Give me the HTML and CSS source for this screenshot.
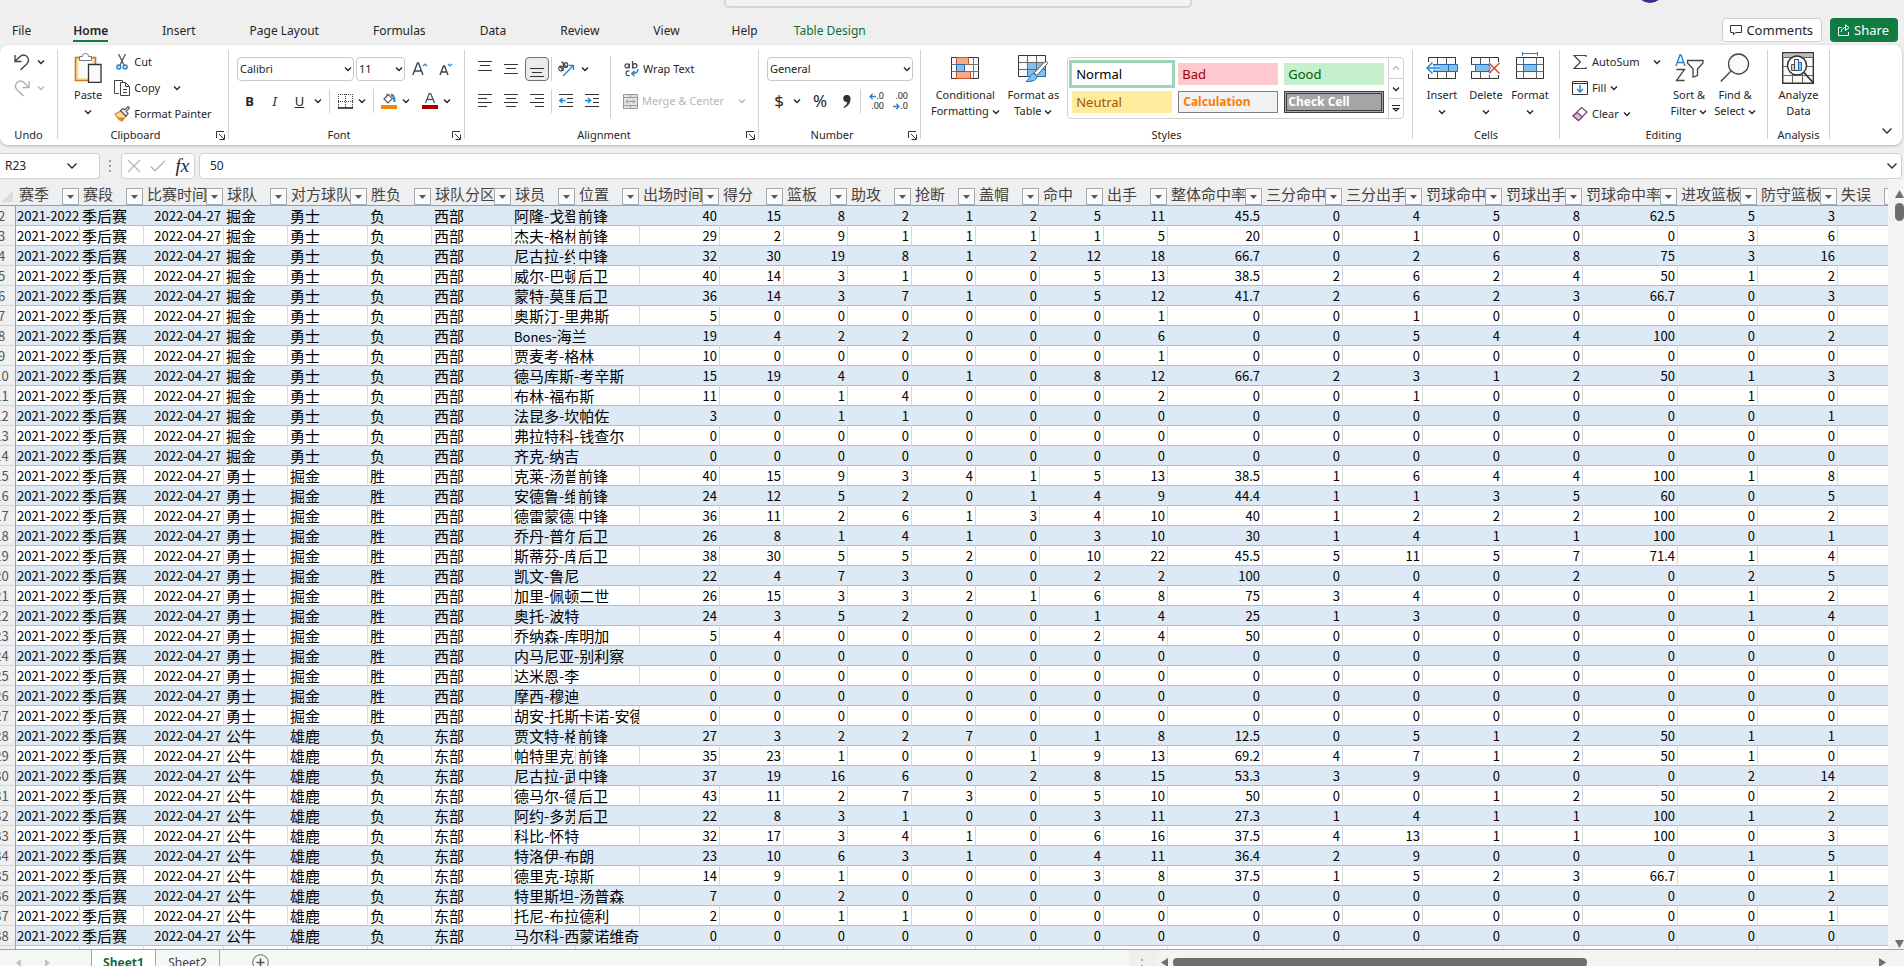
FILE: index.html
```html
<!DOCTYPE html>
<html lang="zh-CN">
<head>
    <meta charset="UTF-8">
    <meta name="viewport" content="width=device-width, initial-scale=1.0">
    <title>Sheet1</title>
    <link rel="stylesheet" href="styles.css">
</head>
<body>
    <svg class="defs" aria-hidden="true">
        <symbol id="chev" viewBox="0 0 8 6"><path d="M1 1.5L4 4.5L7 1.5" fill="none" stroke="currentColor" stroke-width="1.4"/></symbol>
        <symbol id="chev-lg" viewBox="0 0 12 8"><path d="M1.5 1.5L6 6L10.500 1.5" fill="none" stroke="currentColor" stroke-width="1.3"/></symbol>
        <symbol id="launcher" viewBox="0 0 9 9"><path d="M.5 7V.5H8M3 3L8 8M8.500 3.500V8.500H3.500" fill="none" stroke="#333"/></symbol>
    </svg>

    <header class="titlebar">
        <div class="search-box"></div>
        <div class="avatar"></div>
    </header>

    <nav class="tabs">
        <a href="#" class="tab tab-file">File</a>
        <a href="#" class="tab active">Home</a>
        <a href="#" class="tab">Insert</a>
        <a href="#" class="tab">Page Layout</a>
        <a href="#" class="tab">Formulas</a>
        <a href="#" class="tab">Data</a>
        <a href="#" class="tab">Review</a>
        <a href="#" class="tab">View</a>
        <a href="#" class="tab tab-help">Help</a>
        <a href="#" class="tab tab-design">Table Design</a>
        <div class="tab-actions">
            <button class="btn-comments">
                <svg width="12" height="12" viewBox="0 0 12 12"><path d="M.5 1.500H11.500V8.500H5.500L3.500 10.800V8.500H.5Z" fill="none" stroke="#333"/></svg>
                Comments
            </button>
            <button class="btn-share">
                <svg width="12" height="12" viewBox="0 0 12 12"><path d="M3.500 3.500H.5V11.500H10.500V8M3 8C3.500 5 5.500 3.500 8 3.500M7.500 .8L11 3.700L7.500 6.500V.8" fill="none" stroke="#fff"/></svg>
                Share
            </button>
        </div>
    </nav>

    <section class="ribbon">
        <div class="group g-undo">
            <div class="body stack">
                <div class="row">
                    <button class="ib" aria-label="Undo"><svg width="16" height="17" viewBox="0 0 16 17"><path d="M1 1V7.500H7.500M1.200 7.300L5.500 3C8 .6 11 .6 13 2.600C15 4.800 15 7.500 13 9.700L6.500 16" fill="none" stroke="#444" stroke-width="1.4"/></svg></button>
                    <button class="dd" aria-label="Undo list"><svg width="8" height="6"><use href="#chev"/></svg></button>
                </div>
                <div class="row disabled">
                    <button class="ib" aria-label="Redo"><svg width="16" height="17" viewBox="0 0 16 17"><path d="M15 1V7.500H8.500M14.800 7.300L10.500 3C8 .6 5 .6 3 2.600C1 4.800 1 7.500 3 9.700L9.500 16" fill="none" stroke="#b0b0b0" stroke-width="1.4"/></svg></button>
                    <button class="dd" aria-label="Redo list"><svg width="8" height="6"><use href="#chev"/></svg></button>
                </div>
            </div>
            <div class="label">Undo</div>
        </div>
        <i class="sep"></i>

        <div class="group g-clipboard">
            <div class="body cols">
                <button class="big">
                    <svg width="28" height="30" viewBox="0 0 28 30">
                        <path d="M1.500 4.500H21.500V27.500H1.500Z" fill="#fbe0a8" stroke="#cd7a1a" stroke-width="1.600"/>
                        <path d="M4.500 7H18.500V25H4.500Z" fill="#fafafa"/>
                        <path d="M5.500 7.500V3.500H8.500C8.500 1.500 9.500 .5 11.500 .5S14.500 1.500 14.500 3.500H17.500V7.500Z" fill="#fff" stroke="#777"/>
                        <path d="M14.500 11.500H27V29.300H14.500Z" fill="#fafafa" stroke="#333" stroke-width="1.300"/>
                    </svg>
                    <span>Paste</span>
                    <svg width="8" height="6" class="under"><use href="#chev"/></svg>
                </button>
                <div class="stack">
                    <button class="row">
                        <svg width="16" height="16" viewBox="0 0 16 16"><path d="M4.500 0L10 11M11.500 0L6 11" stroke="#555" stroke-width="1.300" fill="none"/><circle cx="4.800" cy="13" r="2" fill="#cfe6f8" stroke="#2283cf" stroke-width="1.300"/><circle cx="11.200" cy="13" r="2" fill="#cfe6f8" stroke="#2283cf" stroke-width="1.300"/></svg>
                        Cut
                    </button>
                    <button class="row">
                        <svg width="16" height="16" viewBox="0 0 16 16"><path d="M5 13.500H.5V.5H8.500V2M6.500 2.500H11.500L15.500 6.500V15.500H6.500ZM11.500 2.500V6.500H15.500M9 9.500H13M9 12.500H13" fill="none" stroke="#444"/></svg>
                        Copy
                        <svg width="8" height="6" class="far"><use href="#chev"/></svg>
                    </button>
                    <button class="row">
                        <svg width="16" height="16" viewBox="0 0 16 16"><path d="M1 8L7 5L12 10L8 15L5 13.500Z" fill="#fbd9a0" stroke="#d9801a" stroke-width="1.200"/><path d="M4 11L10 12L8 15Z" fill="#d9801a"/><path d="M6.500 4.500L9 2.500L10.500 4L14 .6L15.500 2L12 5.500L14 7.500L12 10Z" fill="#fff" stroke="#555" stroke-width="1.200"/></svg>
                        Format Painter
                    </button>
                </div>
            </div>
            <div class="label has-launch">Clipboard</div>
            <button class="launch" aria-label="Clipboard settings"><svg width="9" height="9"><use href="#launcher"/></svg></button>
        </div>
        <i class="sep"></i>

        <div class="group g-font">
            <div class="body two">
                <div class="row">
                    <div class="combo combo-font"><select aria-label="Font"><option>Calibri</option></select><svg width="8" height="6"><use href="#chev"/></svg></div>
                    <div class="combo combo-size"><select aria-label="Font size"><option>11</option></select><svg width="8" height="6"><use href="#chev"/></svg></div>
                    <button class="ib" aria-label="Increase font size"><svg width="16" height="14" viewBox="0 0 16 14"><path d="M.8 13L5.500 1H6.500L11 13M2.500 9H9.500" fill="none" stroke="#444" stroke-width="1.400"/><path d="M11 4L13 2L15 4" fill="none" stroke="#2283cf" stroke-width="1.200"/></svg></button>
                    <button class="ib" aria-label="Decrease font size"><svg width="14" height="14" viewBox="0 0 14 14"><path d="M1 13L4.500 4H5.500L9 13M2.500 10H7.500" fill="none" stroke="#444" stroke-width="1.400"/><path d="M9 2L11 4L13 2" fill="none" stroke="#2283cf" stroke-width="1.200"/></svg></button>
                </div>
                <div class="row">
                    <button class="ib glyph"><b>B</b></button>
                    <button class="ib glyph"><i>I</i></button>
                    <button class="ib glyph"><u>U</u></button>
                    <button class="dd" aria-label="Underline style"><svg width="8" height="6"><use href="#chev"/></svg></button>
                    <i class="vline"></i>
                    <button class="ib sm" aria-label="Borders"><svg width="15" height="15" viewBox="0 0 15 15"><path d="M0 .5H15M0 7.500H15M.5 0V13M7.500 0V13M14.500 0V13" stroke="#444" stroke-dasharray="1 1"/><path d="M0 14H15" stroke="#111" stroke-width="1.500"/></svg></button>
                    <button class="dd" aria-label="Border style"><svg width="8" height="6"><use href="#chev"/></svg></button>
                    <i class="vline"></i>
                    <button class="ib sm" aria-label="Fill colour"><svg width="16" height="16" viewBox="0 0 16 16"><path d="M3 6L7.500 1.500L11.500 5.500L7 10Z" fill="#fff" stroke="#555" stroke-width="1.200"/><path d="M6 3V.5" stroke="#555"/><path d="M10 1.500C13 2 13.500 5 13.500 9" stroke="#2283cf" stroke-width="2" fill="none"/><path d="M0 12H16V16H0Z" fill="#f28b00"/></svg></button>
                    <button class="dd" aria-label="Fill colours"><svg width="8" height="6"><use href="#chev"/></svg></button>
                    <button class="ib sm after" aria-label="Font colour"><svg width="16" height="16" viewBox="0 0 16 16"><path d="M3.500 10L7.500 0H8.500L12.500 10M5 6.500H11" fill="none" stroke="#555" stroke-width="1.300"/><path d="M0 12H16V16H0Z" fill="#a80000"/></svg></button>
                    <button class="dd" aria-label="Font colours"><svg width="8" height="6"><use href="#chev"/></svg></button>
                </div>
            </div>
            <div class="label has-launch">Font</div>
            <button class="launch" aria-label="Font settings"><svg width="9" height="9"><use href="#launcher"/></svg></button>
        </div>
        <i class="sep"></i>

        <div class="group g-align">
            <div class="body cols">
                <div class="two">
                    <div class="row">
                        <button class="ib" aria-label="Top align"><svg width="14" height="18" viewBox="0 0 14 18"><path d="M0 1.500H14M2 5.500H12M0 10.500H14" stroke="#333"/></svg></button>
                        <button class="ib" aria-label="Middle align"><svg width="14" height="18" viewBox="0 0 14 18"><path d="M0 4.500H14M2 8.500H12M0 13.500H14" stroke="#333"/></svg></button>
                        <button class="ib pressed" aria-label="Bottom align"><svg width="14" height="18" viewBox="0 0 14 18"><path d="M0 8.500H14M2 12.500H12M0 16.500H14" stroke="#333"/></svg></button>
                        <i class="vline"></i>
                        <button class="ib" aria-label="Orientation"><svg width="18" height="16" viewBox="0 0 18 16"><g fill="none" stroke="#444" stroke-width="1.200"><circle cx="4" cy="7.500" r="2.300"/><path d="M2.500 5L6.500 9.500"/><circle cx="8.500" cy="4" r="2.300"/><path d="M4.500 .5L10 6.500"/></g><path d="M6 15L16 5M12 4.500H16.500V9" fill="none" stroke="#2283cf" stroke-width="1.300"/></svg></button>
                        <button class="dd" aria-label="Orientation options"><svg width="8" height="6"><use href="#chev"/></svg></button>
                    </div>
                    <div class="row">
                        <button class="ib" aria-label="Align left"><svg width="14" height="14" viewBox="0 0 14 14"><path d="M0 .5H14M0 4.500H9M0 8.500H14M0 12.500H9" stroke="#333"/></svg></button>
                        <button class="ib" aria-label="Center"><svg width="14" height="14" viewBox="0 0 14 14"><path d="M0 .5H14M2 4.500H12M0 8.500H14M2 12.500H12" stroke="#333"/></svg></button>
                        <button class="ib" aria-label="Align right"><svg width="14" height="14" viewBox="0 0 14 14"><path d="M0 .5H14M5 4.500H14M0 8.500H14M5 12.500H14" stroke="#333"/></svg></button>
                        <i class="vline"></i>
                        <button class="ib" aria-label="Decrease indent"><svg width="14" height="14" viewBox="0 0 14 14"><path d="M0 .5H14M8 4.500H14M8 8.500H14M0 12.500H14" stroke="#333"/><path d="M.8 6.500H6.500M3.500 4L.8 6.500L3.500 9" fill="none" stroke="#2283cf" stroke-width="1.300"/></svg></button>
                        <button class="ib" aria-label="Increase indent"><svg width="14" height="14" viewBox="0 0 14 14"><path d="M0 .5H14M8 4.500H14M8 8.500H14M0 12.500H14" stroke="#333"/><path d="M0 6.500H5.700M3 4L5.700 6.500L3 9" fill="none" stroke="#2283cf" stroke-width="1.300"/></svg></button>
                    </div>
                </div>
                <i class="vline tall"></i>
                <div class="two wrap-col">
                    <button class="row">
                        <svg width="16" height="16" viewBox="0 0 16 16"><g fill="none" stroke="#444" stroke-width="1.200"><circle cx="4" cy="4.800" r="2"/><path d="M6.300 2.500V7.500M9.500 0V7.500M6.500 10.300C5 9.300 3 10.200 3 12.300S5 15.300 6.500 14.300"/><circle cx="11.800" cy="4.800" r="2.200"/></g><path d="M15 8C15 11 13.500 12.500 9 12.500M11.500 9.800L8.800 12.500L11.500 15.200" fill="none" stroke="#2283cf" stroke-width="1.400"/></svg>
                        Wrap Text
                    </button>
                    <button class="row" disabled>
                        <svg width="15" height="15" viewBox="0 0 15 15"><path d="M.5 .5H14.500V14.500H.5ZM.5 3.500H14.500M.5 11.500H14.500M7.500 .5V3.500M7.500 11.500V14.500" fill="#e4e4e4" stroke="#999"/><path d="M3 7.500H12M5 5.500L3 7.500L5 9.500M10 5.500L12 7.500L10 9.500" fill="none" stroke="#999"/></svg>
                        Merge &amp; Center
                        <svg width="8" height="6" class="end"><use href="#chev"/></svg>
                    </button>
                </div>
            </div>
            <div class="label has-launch">Alignment</div>
            <button class="launch" aria-label="Alignment settings"><svg width="9" height="9"><use href="#launcher"/></svg></button>
        </div>
        <i class="sep"></i>

        <div class="group g-number">
            <div class="body two">
                <div class="row">
                    <div class="combo combo-number"><select aria-label="Number format"><option>General</option></select><svg width="8" height="6"><use href="#chev"/></svg></div>
                </div>
                <div class="row">
                    <button class="ib sign">$</button>
                    <button class="dd" aria-label="Currency"><svg width="8" height="6"><use href="#chev"/></svg></button>
                    <button class="ib sign pct">%</button>
                    <button class="ib" aria-label="Comma style"><svg width="8" height="13" viewBox="0 0 8 13"><path d="M3.500 0A3.500 3.500 0 0 1 7.500 4C7.500 8 5 11.500 1 13L.5 12C3 10.500 4 9 4 7A3.500 3.500 0 1 1 3.500 0Z" fill="#333"/></svg></button>
                    <i class="vline"></i>
                    <button class="dec">
                        <span><svg width="7" height="7" viewBox="0 0 7 7"><path d="M7 3.500H1M3.700 .8L1 3.500L3.700 6.200" fill="none" stroke="#2283cf" stroke-width="1.300"/></svg>.0</span>
                        <span>.00</span>
                    </button>
                    <button class="dec">
                        <span>.00</span>
                        <span><svg width="7" height="7" viewBox="0 0 7 7"><path d="M0 3.500H6M3.300 .8L6 3.500L3.300 6.200" fill="none" stroke="#2283cf" stroke-width="1.300"/></svg>.0</span>
                    </button>
                </div>
            </div>
            <div class="label has-launch">Number</div>
            <button class="launch" aria-label="Number settings"><svg width="9" height="9"><use href="#launcher"/></svg></button>
        </div>
        <i class="sep"></i>

        <div class="group g-styles">
            <div class="body cols">
                <button class="big">
                    <svg width="28" height="22" viewBox="0 0 28 22">
                        <path d="M.5 .5H27.500V21.500H.5Z" fill="#fafafa" stroke="#333"/><path d="M.5 7.500H27.500M.5 14.500H27.500M5.500 .5V21.500M22.500 .5V21.500" stroke="#777"/>
                        <path d="M5.500 .5H17.500V7.500H5.500ZM5.500 14.500H19.500V21.500H5.500Z" fill="#f4ab8b" stroke="#c8502b"/><path d="M5.500 7.500H13.500V14.500H5.500Z" fill="#83beec" stroke="#1f6fb8"/>
                    </svg>
                    <span>Conditional<br>Formatting <svg width="8" height="6"><use href="#chev"/></svg></span>
                </button>
                <button class="big">
                    <svg width="30" height="28" viewBox="0 0 30 28">
                        <path d="M.5 1.500H27.500V22.500H.5Z" fill="#fafafa" stroke="#333"/><path d="M9.500 8.500H27.500V22.500H9.500Z" fill="#83beec" stroke="#1f6fb8"/><path d="M.5 8.500H27.500M.5 15.500H27.500M9.500 1.500V22.500M18.500 1.500V22.500" stroke="#666"/>
                        <path d="M28.500 7.500C29.500 8 29.500 9 29 10L19 21.500L16 19L26 8.500Z" fill="#fff" stroke="#555"/><path d="M16 19.500L19 22C19.500 25.500 15 28 8 27.500C11 26 11.500 20 16 19.500Z" fill="#83beec" stroke="#1f6fb8"/>
                    </svg>
                    <span>Format as<br>Table <svg width="8" height="6"><use href="#chev"/></svg></span>
                </button>
                <div class="gallery">
                    <div class="swatches">
                        <button class="st normal">Normal</button>
                        <button class="st bad">Bad</button>
                        <button class="st good">Good</button>
                        <button class="st neutral">Neutral</button>
                        <button class="st calc">Calculation</button>
                        <button class="st check">Check Cell</button>
                    </div>
                    <div class="gallery-nav">
                        <button class="faded" aria-label="Previous styles"><svg width="8" height="6" viewBox="0 0 8 6"><path d="M1 4.500L4 1.500L7 4.500" fill="none" stroke="currentColor" stroke-width="1.200"/></svg></button>
                        <button aria-label="Next styles"><svg width="8" height="6"><use href="#chev"/></svg></button>
                        <button aria-label="More styles"><svg width="8" height="8" viewBox="0 0 8 8"><path d="M0 .5H8M1.500 3.500L4 6L6.500 3.500Z" fill="none" stroke="currentColor" stroke-width="1.200"/></svg></button>
                    </div>
                </div>
            </div>
            <div class="label">Styles</div>
        </div>
        <i class="sep"></i>

        <div class="group g-cells">
            <div class="body cols">
                <button class="big">
                    <svg width="32" height="22" viewBox="0 0 32 22"><path d="M2.500 .5H29.500V21.500H2.500Z" fill="#fafafa" stroke="#333"/><path d="M2.500 7.500H29.500M2.500 14.500H29.500M11.500 .5V21.500M20.500 .5V21.500" stroke="#555"/><path d="M8 7.500H31.500V14.500H8Z" fill="#83beec" stroke="#1f6fb8"/><path d="M22.500 7.500V14.500" stroke="#1f6fb8"/><path d="M0 5H7V9.500H14V12.500H7V17H0Z" fill="#fff"/><path d="M1 11H14M6.500 5.500L1 11L6.500 16.500" fill="none" stroke="#2283cf" stroke-width="1.500"/></svg>
                    <span>Insert</span>
                    <svg width="8" height="6" class="under"><use href="#chev"/></svg>
                </button>
                <button class="big">
                    <svg width="30" height="22" viewBox="0 0 30 22"><path d="M.5 .5H27.500V21.500H.5Z" fill="#fafafa" stroke="#333"/><path d="M.5 7.500H27.500M.5 14.500H27.500M9.500 .5V21.500M18.500 .5V21.500" stroke="#555"/><path d="M0 8H4V14H0Z" fill="#fff"/><path d="M4.500 7.500H17L20 11L17 14.500H4.500Z" fill="#83beec" stroke="#1f6fb8"/><path d="M17 5H30V18H17L20 11Z" fill="#fff"/><path d="M18 6L28.500 16.500M28.500 6L18 16.500" stroke="#e0452c" stroke-width="1.500"/></svg>
                    <span>Delete</span>
                    <svg width="8" height="6" class="under"><use href="#chev"/></svg>
                </button>
                <button class="big">
                    <svg width="28" height="32" viewBox="0 0 28 32"><path d="M6.500 0V4M21.500 0V4M6.500 1.500H21.500" stroke="#2283cf"/><path d="M.5 5.500H27.500V26.500H.5Z" fill="#fafafa" stroke="#333"/><path d="M.5 12.500H27.500M.5 19.500H27.500M7.500 5.500V26.500M20.500 5.500V26.500" stroke="#666"/><path d="M7.500 12.500H20.500V19.500H7.500Z" fill="#83beec" stroke="#1f6fb8"/></svg>
                    <span>Format</span>
                    <svg width="8" height="6" class="under"><use href="#chev"/></svg>
                </button>
            </div>
            <div class="label">Cells</div>
        </div>
        <i class="sep"></i>

        <div class="group g-editing">
            <div class="body cols">
                <div class="stack">
                    <button class="row">
                        <svg width="16" height="16" viewBox="0 0 16 16"><path d="M14 3V1.500H2L8.500 8L2 14.500H14V13" fill="none" stroke="#444" stroke-width="1.200"/></svg>
                        AutoSum
                        <svg width="8" height="6" class="far"><use href="#chev"/></svg>
                    </button>
                    <button class="row">
                        <svg width="16" height="16" viewBox="0 0 16 16"><path d="M.5 1.500H15.500V14.500H.5ZM.5 3.500H15.500" fill="none" stroke="#333"/><path d="M8 5V12M5 9L8 12L11 9" fill="none" stroke="#2283cf" stroke-width="1.400"/></svg>
                        Fill <svg width="8" height="6"><use href="#chev"/></svg>
                    </button>
                    <button class="row">
                        <svg width="16" height="16" viewBox="0 0 16 16"><path d="M9.500 1.500L15 6L6.500 14.500L1 10Z" fill="#fff" stroke="#7a3f7a" stroke-width="1.200"/><path d="M5 6.500L10.500 11L6.500 14.500L1 10Z" fill="#d9bfd9" stroke="#7a3f7a" stroke-width="1.200"/></svg>
                        Clear <svg width="8" height="6"><use href="#chev"/></svg>
                    </button>
                </div>
                <button class="big">
                    <svg width="29" height="28" viewBox="0 0 29 28"><path d="M1 12L5 1H6L10 12M2.500 8.500H8.500" fill="none" stroke="#2283cf" stroke-width="1.400"/><path d="M1.500 15.500H9.500L1.500 26.500H9.500" fill="none" stroke="#444" stroke-width="1.300"/><path d="M12.500 6.500H28V9L22.500 15V21.500L18 23V15L12.500 9Z" fill="#fafafa" stroke="#444" stroke-width="1.300"/></svg>
                    <span>Sort &amp;<br>Filter <svg width="8" height="6"><use href="#chev"/></svg></span>
                </button>
                <button class="big">
                    <svg width="30" height="30" viewBox="0 0 30 30"><circle cx="18.500" cy="11" r="10" fill="#fafafa" stroke="#444" stroke-width="1.300"/><path d="M11 18L.8 28.500" stroke="#444" stroke-width="1.400"/></svg>
                    <span>Find &amp;<br>Select <svg width="8" height="6"><use href="#chev"/></svg></span>
                </button>
            </div>
            <div class="label">Editing</div>
        </div>
        <i class="sep"></i>

        <div class="group g-analysis">
            <div class="body cols">
                <button class="big">
                    <svg width="32" height="32" viewBox="0 0 32 32"><path d="M.7 .7H31.300V31.300H.7Z" fill="#fafafa" stroke="#333" stroke-width="1.400"/><path d="M1.500 1.500H30.500V5H1.500Z" fill="#bbb"/><path d="M1 5.500H31M1 14.500H31M1 23.500H31M10.500 14V31M20.500 14V31" stroke="#666"/><circle cx="15" cy="13.500" r="9.500" fill="#fff" stroke="#333" stroke-width="1.500"/><path d="M9.500 12.500H12.500V18.500H9.500Z" fill="#ccc" stroke="#555"/><path d="M12.500 7.500H16.500V18.500H12.500Z" fill="#eee" stroke="#444"/><path d="M16.500 10.500H19.500V18.500H16.500Z" fill="#83beec" stroke="#1f6fb8"/><path d="M22 20.500L31 30.500" stroke="#333" stroke-width="1.800"/></svg>
                    <span>Analyze<br>Data</span>
                </button>
            </div>
            <div class="label">Analysis</div>
        </div>
        <i class="sep"></i>
        <button class="collapse" aria-label="Collapse ribbon"><svg width="12" height="8"><use href="#chev-lg"/></svg></button>
    </section>

    <section class="formula-bar">
        <div class="name-box"><input type="text" value="R23" aria-label="Name box"><svg width="12" height="8"><use href="#chev-lg"/></svg></div>
        <svg class="grip" width="3" height="12" viewBox="0 0 3 12"><path d="M0 0H2V2H0ZM0 5H2V7H0ZM0 10H2V12H0Z" fill="#999"/></svg>
        <div class="fx-box">
            <button aria-label="Cancel"><svg width="14" height="14" viewBox="0 0 14 14"><path d="M1 1L13 13M13 1L1 13" stroke="#b5b5b5" stroke-width="1.300"/></svg></button>
            <button aria-label="Enter"><svg width="16" height="12" viewBox="0 0 16 12"><path d="M.8 6.500L5 10.800L15.200 .8" fill="none" stroke="#b5b5b5" stroke-width="1.400"/></svg></button>
            <button class="fx">fx</button>
        </div>
        <div class="formula-input"><input type="text" value="50" aria-label="Formula"><svg width="12" height="8"><use href="#chev-lg"/></svg></div>
    </section>

    <main class="sheet">
        <div class="grid-wrap">
            <table id="grid">
                <colgroup id="cols"></colgroup>
                <thead><tr id="head"></tr></thead>
                <tbody id="rows"></tbody>
            </table>
        </div>
        <div class="vscroll">
            <svg width="9" height="8" viewBox="0 0 9 8"><path d="M4.500 0L9 8H0Z" fill="#6e6e6e"/></svg>
            <div class="vthumb"></div>
            <svg width="9" height="8" viewBox="0 0 9 8" class="down"><path d="M0 0H9L4.500 8Z" fill="#6e6e6e"/></svg>
        </div>
    </main>

    <footer class="sheet-bar">
        <div class="sheet-nav">
            <button aria-label="Previous sheet"><svg width="5" height="8" viewBox="0 0 5 8"><path d="M5 0V8L0 4Z" fill="#c2c2c2"/></svg></button>
            <button aria-label="Next sheet"><svg width="5" height="8" viewBox="0 0 5 8"><path d="M0 0V8L5 4Z" fill="#c2c2c2"/></svg></button>
        </div>
        <button class="sheet-tab current">Sheet1</button>
        <button class="sheet-tab">Sheet2</button>
        <button class="add-sheet" aria-label="New sheet"><svg width="17" height="17" viewBox="0 0 17 17"><circle cx="8.500" cy="8.500" r="7.800" fill="none" stroke="#666"/><path d="M8.500 4.500V12.500M4.500 8.500H12.500" stroke="#555" stroke-width="1.600"/></svg></button>
        <div class="hscroll">
            <svg width="2" height="8" viewBox="0 0 2 8"><path d="M0 0H2V2H0ZM0 6H2V8H0Z" fill="#aaa"/></svg>
            <div class="htrack">
                <svg width="7" height="9" viewBox="0 0 7 9"><path d="M7 0V9L0 4.500Z" fill="#6e6e6e"/></svg>
                <div class="hroom"><div class="hthumb"></div></div>
                <svg width="7" height="9" viewBox="0 0 7 9"><path d="M0 0V9L7 4.500Z" fill="#6e6e6e"/></svg>
            </div>
        </div>
    </footer>

    <script>
        const columns = [
            ["赛季", 64], ["赛段", 64], ["比赛时间", 80], ["球队", 64], ["对方球队", 80], ["胜负", 64],
            ["球队分区", 80], ["球员", 64], ["位置", 64], ["出场时间", 80], ["得分", 64], ["篮板", 64],
            ["助攻", 64], ["抢断", 64], ["盖帽", 64], ["命中", 64], ["出手", 64], ["整体命中率", 95],
            ["三分命中", 80], ["三分出手", 80], ["罚球命中", 80], ["罚球出手", 80], ["罚球命中率", 95],
            ["进攻篮板", 80], ["防守篮板", 80], ["失误", 64]
        ];

        // equipo, rival, resultado, zona
        const teams = {
            N: ["掘金", "勇士", "负", "西部"],
            W: ["勇士", "掘金", "胜", "西部"],
            B: ["公牛", "雄鹿", "负", "东部"]
        };

        const zeros = "0 0 0 0 0 0 0 0 0 0 0 0 0 0 0 0";
        const players = [
            ["N", "阿隆-戈登", "前锋", "40 15 8 2 1 2 5 11 45.5 0 4 5 8 62.5 5 3"],
            ["N", "杰夫-格林", "前锋", "29 2 9 1 1 1 1 5 20 0 1 0 0 0 3 6"],
            ["N", "尼古拉-约基奇", "中锋", "32 30 19 8 1 2 12 18 66.7 0 2 6 8 75 3 16"],
            ["N", "威尔-巴顿", "后卫", "40 14 3 1 0 0 5 13 38.5 2 6 2 4 50 1 2"],
            ["N", "蒙特-莫里斯", "后卫", "36 14 3 7 1 0 5 12 41.7 2 6 2 3 66.7 0 3"],
            ["N", "奥斯汀-里弗斯", "", "5 0 0 0 0 0 0 1 0 0 1 0 0 0 0 0"],
            ["N", "<span>Bones</span>-海兰", "", "19 4 2 2 0 0 0 6 0 0 5 4 4 100 0 2"],
            ["N", "贾麦考-格林", "", "10 0 0 0 0 0 0 1 0 0 0 0 0 0 0 0"],
            ["N", "德马库斯-考辛斯", "", "15 19 4 0 1 0 8 12 66.7 2 3 1 2 50 1 3"],
            ["N", "布林-福布斯", "", "11 0 1 4 0 0 0 2 0 0 1 0 0 0 1 0"],
            ["N", "法昆多-坎帕佐", "", "3 0 1 1 0 0 0 0 0 0 0 0 0 0 0 1"],
            ["N", "弗拉特科-钱查尔", "", zeros],
            ["N", "齐克-纳吉", "", zeros],
            ["W", "克莱-汤普森", "前锋", "40 15 9 3 4 1 5 13 38.5 1 6 4 4 100 1 8"],
            ["W", "安德鲁-维金斯", "前锋", "24 12 5 2 0 1 4 9 44.4 1 1 3 5 60 0 5"],
            ["W", "德雷蒙德-格林", "中锋", "36 11 2 6 1 3 4 10 40 1 2 2 2 100 0 2"],
            ["W", "乔丹-普尔", "后卫", "26 8 1 4 1 0 3 10 30 1 4 1 1 100 0 1"],
            ["W", "斯蒂芬-库里", "后卫", "38 30 5 5 2 0 10 22 45.5 5 11 5 7 71.4 1 4"],
            ["W", "凯文-鲁尼", "", "22 4 7 3 0 0 2 2 100 0 0 0 2 0 2 5"],
            ["W", "加里-佩顿二世", "", "26 15 3 3 2 1 6 8 75 3 4 0 0 0 1 2"],
            ["W", "奥托-波特", "", "24 3 5 2 0 0 1 4 25 1 3 0 0 0 1 4"],
            ["W", "乔纳森-库明加", "", "5 4 0 0 0 0 2 4 50 0 0 0 0 0 0 0"],
            ["W", "内马尼亚-别利察", "", zeros],
            ["W", "达米恩-李", "", zeros],
            ["W", "摩西-穆迪", "", zeros],
            ["W", "胡安-托斯卡诺-安德森", "", zeros],
            ["B", "贾文特-格林", "前锋", "27 3 2 2 7 0 1 8 12.5 0 5 1 2 50 1 1"],
            ["B", "帕特里克-威廉姆斯", "前锋", "35 23 1 0 0 1 9 13 69.2 4 7 1 2 50 1 0"],
            ["B", "尼古拉-武切维奇", "中锋", "37 19 16 6 0 2 8 15 53.3 3 9 0 0 0 2 14"],
            ["B", "德马尔-德罗赞", "后卫", "43 11 2 7 3 0 5 10 50 0 0 1 2 50 0 2"],
            ["B", "阿约-多苏姆", "后卫", "22 8 3 1 0 0 3 11 27.3 1 4 1 1 100 1 2"],
            ["B", "科比-怀特", "", "32 17 3 4 1 0 6 16 37.5 4 13 1 1 100 0 3"],
            ["B", "特洛伊-布朗", "", "23 10 6 3 1 0 4 11 36.4 2 9 0 0 0 1 5"],
            ["B", "德里克-琼斯", "", "14 9 1 0 0 0 3 8 37.5 1 5 2 3 66.7 0 1"],
            ["B", "特里斯坦-汤普森", "", "7 0 2 0 0 0 0 0 0 0 0 0 0 0 0 2"],
            ["B", "托尼-布拉德利", "", "2 0 1 1 0 0 0 0 0 0 0 0 0 0 0 1"],
            ["B", "马尔科-西蒙诺维奇", "", zeros]
        ];

        document.getElementById("cols").innerHTML = `<col style="width: 28px">` +
            columns.map(c => `<col style="width: ${c[1]}px">`).join("");

        document.getElementById("head").innerHTML = `<th class="corner"></th>` + columns.map(c => `
            <th><div class="th"><span>${c[0]}</span><button aria-label="${c[0]}"><svg width="7" height="4" viewBox="0 0 7 4"><path d="M0 0H7L3.500 4Z" fill="#555"/></svg></button></div></th>`).join("");

        let html = "";
        players.forEach((p, i) => {
            const [team, name, pos, stats] = p;
            const [own, rival, result, zone] = teams[team];
            // sin posición, el nombre ocupa también la celda vecina
            const who = pos ? `<td class="cut">${name}</td><td>${pos}</td>` : `<td class="cut" colspan="2">${name}</td>`;
            html += `<tr><th>${i + 2}</th><td class="num season">2021-2022</td><td>季后赛</td><td class="num">2022-04-27</td>
                <td>${own}</td><td>${rival}</td><td>${result}</td><td>${zone}</td>${who}
                ${stats.split(" ").map(n => `<td class="num">${n}</td>`).join("")}<td></td></tr>`;
        });
        html += `<tr><th></th>${"<td></td>".repeat(columns.length)}</tr>`;
        document.getElementById("rows").innerHTML = html;
    </script>
</body>
</html>
```
FILE: styles.css
```css
* {
    box-sizing: border-box;
}
body {
    margin: 0;
    height: 100vh;
    display: flex;
    flex-direction: column;
    overflow: hidden;
    background: #efefef;
    color: #262626;
    font: 11px/16px "Noto Sans", "Noto Sans CJK SC", sans-serif;
}
button, input, select {
    font: inherit;
    color: inherit;
    border: none;
    background: none;
    padding: 0;
    margin: 0;
    outline: none;
}
button {
    cursor: pointer;
}
svg {
    flex: none;
}
.defs {
    position: absolute;
    width: 0;
    height: 0;
}

/* title bar and tabs */
.titlebar {
    position: relative;
    flex: none;
    height: 15px;
    padding-left: 12px;
    overflow: hidden;
}
.search-box {
    width: 468px;
    height: 8px;
    margin: 0 auto;
    border: 2px solid #d6d6d6;
    border-top: none;
    border-radius: 0 0 5px 5px;
    background: #f3f3f3;
}
.avatar {
    position: absolute;
    right: 240px;
    top: -25px;
    width: 28px;
    height: 28px;
    border-radius: 50%;
    background: #3b2e8c;
}
.tabs {
    flex: none;
    display: flex;
    align-items: center;
    height: 30px;
    font-size: 12px;
}
.tab {
    position: relative;
    padding: 2px 27px 0;
    line-height: 28px;
    color: #262626;
    text-decoration: none;
}
.tab-file {
    padding: 2px 15px 0 12px;
}
.tab.active {
    font-weight: 600;
}
.tab.active::after {
    content: "";
    position: absolute;
    left: 27px;
    right: 27px;
    bottom: 3px;
    height: 2px;
    background: #107c41;
}
.tab-help {
    padding: 2px 18px 0 25px;
}
.tab-design {
    padding-left: 18px;
    color: #0f6c38;
}
.tab-actions {
    display: flex;
    gap: 8px;
    margin-left: auto;
    padding-right: 6px;
    font-size: 13px;
}
.tab-actions button {
    display: flex;
    align-items: center;
    gap: 4px;
    height: 24px;
    border-radius: 4px;
}
.btn-comments {
    padding: 0 8px 0 7px;
    border: 1px solid #d1d1d1;
    background: #fff;
}
.btn-share {
    padding: 0 9px 0 8px;
    background: #107c41;
    color: #fff;
}

/* ribbon */
.ribbon {
    flex: none;
    display: flex;
    height: 100px;
    margin-right: 2px;
    background: #fff;
    border-radius: 8px;
    box-shadow: 0 1px 3px rgba(0, 0, 0, 0.25);
}
.sep {
    flex: none;
    width: 1px;
    margin: 5px 0 6px;
    background: #d1d1d1;
}
.group {
    position: relative;
    flex: none;
    display: flex;
    flex-direction: column;
}
.body {
    height: 82px;
}
.label {
    height: 18px;
    text-align: center;
}
.has-launch {
    padding-right: 15px;
}
.launch {
    position: absolute;
    right: 3px;
    bottom: 5px;
    height: 9px;
    display: flex;
}
.row {
    display: flex;
    align-items: center;
}
.cols {
    display: flex;
}
.stack {
    padding-top: 4px;
}
.stack .row {
    height: 26px;
}
.stack button.row, .wrap-col .row {
    gap: 4px;
}
.two {
    display: flex;
    flex-direction: column;
    gap: 8px;
    padding-top: 12px;
}
.two .row {
    height: 24px;
}
.ib {
    display: flex;
    align-items: center;
    justify-content: center;
    width: 26px;
    height: 24px;
}
.ib.sm {
    width: 22px;
}
.ib.after {
    margin-left: 7px;
}
.dd {
    display: flex;
    align-items: center;
    justify-content: center;
    width: 12px;
    height: 24px;
}
.disabled, button:disabled {
    color: #b5b5b5;
}
.vline {
    width: 1px;
    height: 24px;
    margin: 0 4px 0 5px;
    background: #d1d1d1;
}
.vline.tall {
    height: 62px;
    margin: 11px 12px 0 5px;
}
.big {
    display: flex;
    flex-direction: column;
    align-items: center;
    padding-top: 4px;
    text-align: center;
    white-space: nowrap;
}
.big > svg:first-child {
    height: 38px;
}
.big .under {
    margin-top: 6px;
}
.far {
    margin-left: 9px;
}
.combo {
    position: relative;
    height: 24px;
}
.combo select {
    width: 100%;
    height: 24px;
    padding: 0 2px;
    border: 1px solid #c8c8c8;
    border-radius: 4px;
    background: #fff;
    appearance: none;
}
.combo svg {
    position: absolute;
    right: 2px;
    top: 9px;
    pointer-events: none;
}

.g-undo {
    width: 57px;
}
.g-undo .stack {
    padding-left: 9px;
}
.g-clipboard {
    width: 170px;
}
.g-clipboard .cols {
    padding-left: 16px;
    gap: 12px;
}
.g-font {
    width: 235px;
}
.g-font .body {
    padding-left: 8px;
}
.combo-font {
    width: 117px;
    margin-right: 2px;
}
.combo-size {
    width: 49px;
    margin-right: 2px;
}
.glyph {
    width: 25px;
    font-size: 13px;
}
.g-align {
    width: 293px;
}
.g-align .body {
    padding-left: 7px;
}
.g-align .row .vline {
    margin: 0 1px;
}
.pressed {
    width: 24px;
    margin: 0 1px;
    border: 1px solid #707070;
    border-radius: 4px;
    background: #ebebeb;
}
.wrap-col .end {
    margin-left: 10px;
}
.g-number {
    width: 161px;
}
.g-number .body {
    padding-left: 8px;
}
.g-number .vline {
    margin: 0 2px 0 0;
}
.combo-number {
    width: 146px;
}
.sign {
    width: 24px;
    font-size: 17px;
}
.pct {
    margin-left: 3px;
    width: 28px;
}
.dec {
    width: 24px;
    padding-right: 3px;
    font-size: 9px;
    line-height: 10px;
}
.dec span {
    display: flex;
    align-items: center;
    justify-content: flex-end;
}
.g-styles {
    width: 491px;
}
.g-styles .cols {
    padding-left: 10px;
    gap: 8px;
}
.gallery {
    display: flex;
    height: 62px;
    margin-top: 12px;
    border: 1px solid #d1d1d1;
    border-radius: 4px;
}
.swatches {
    display: grid;
    grid-template-columns: repeat(3, 100px);
    grid-auto-rows: 22px;
    gap: 6px;
    padding: 5px 4px;
}
.st {
    padding-left: 4px;
    text-align: left;
    font-size: 13px;
    line-height: 20px;
}
.normal {
    background: #fff;
    color: #000;
    outline: 3px solid #9bd5b5;
}
.bad {
    background: #ffc7ce;
    color: #9c0006;
}
.good {
    background: #c6efce;
    color: #006100;
}
.neutral {
    background: #ffeb9c;
    color: #9c5700;
}
.calc {
    border: 1px solid #7f7f7f;
    background: #f2f2f2;
    color: #fa7d00;
    font-size: 12px;
    font-weight: bold;
}
.check {
    border: 3px double #3f3f3f;
    background: #a5a5a5;
    color: #fff;
    padding-left: 1px;
    font-size: 12px;
    font-weight: bold;
    line-height: 16px;
}
.gallery-nav {
    display: grid;
    grid-template-rows: repeat(3, 1fr);
    width: 15px;
    border-left: 1px solid #d1d1d1;
}
.gallery-nav button {
    display: flex;
    align-items: center;
    justify-content: center;
}
.gallery-nav button + button {
    border-top: 1px solid #d1d1d1;
}
.gallery-nav .faded {
    color: #b5b5b5;
}
.g-cells {
    width: 146px;
}
.g-cells .cols {
    display: grid;
    grid-template-columns: repeat(3, 44px);
    padding-left: 7px;
}
.g-editing {
    width: 207px;
}
.g-editing .cols {
    padding-left: 12px;
}
.g-editing .stack {
    width: 94px;
}
.g-editing .big {
    width: 46px;
}
.g-analysis {
    width: 61px;
}
.g-analysis .cols {
    justify-content: center;
}
.collapse {
    margin: auto 9px 10px auto;
    height: 8px;
    display: flex;
}

/* formula bar */
.formula-bar {
    flex: none;
    display: flex;
    align-items: center;
    height: 26px;
    margin: 8px 2px 0 0;
    font-size: 12px;
}
.name-box, .fx-box, .formula-input {
    display: flex;
    align-items: center;
    height: 26px;
    border: 1px solid #d1d1d1;
    border-radius: 4px;
    background: #fff;
}
.name-box {
    width: 100px;
    border-left: none;
    border-radius: 0 4px 4px 0;
}
.name-box input {
    width: 66px;
    padding-left: 5px;
}
.grip {
    margin: 0 9px 0 9px;
}
.fx-box {
    width: 74px;
    margin-right: 4px;
    justify-content: space-around;
}
.fx-box button {
    display: flex;
}
.fx {
    font: italic 19px/22px "Liberation Serif", serif;
}
.formula-input {
    flex: 1;
    padding-right: 3px;
}
.formula-input input {
    flex: 1;
    padding-left: 10px;
}

/* sheet */
.sheet {
    flex: 1;
    min-height: 0;
    display: flex;
}
.grid-wrap {
    flex: 1;
    min-width: 0;
    overflow: hidden;
}
table {
    width: 0;
    margin-left: -12px;
    table-layout: fixed;
    border-collapse: separate;
    border-spacing: 0;
    font: 15px/19px "Noto Sans CJK SC", sans-serif;
    color: #000;
}
th, td {
    padding: 0;
    white-space: nowrap;
    font-weight: normal;
}
thead th {
    height: 27px;
    padding-left: 3px;
    border-bottom: 1px solid #9f9f9f;
    color: #444;
    text-align: left;
    vertical-align: bottom;
}
.th {
    display: flex;
    height: 20px;
}
.th span {
    flex: 1;
    width: 0;
    line-height: 18px;
    overflow: hidden;
}
.th button {
    flex: none;
    display: flex;
    align-items: center;
    justify-content: center;
    width: 17px;
    height: 17px;
    margin: 3px 1px 0 0;
    border: 1px solid #a5a9b0;
    background: #fbfbfb;
}
thead .corner {
    background: linear-gradient(135deg, transparent 50%, #dcdcdc 50%) 13px 11px / 12px 12px no-repeat;
}
tbody td {
    height: 20px;
    padding-left: 2px;
    border-bottom: 1px solid #9bc2e6;
    border-right: 1px solid #d9d9d9;
    background: #fff;
}
tbody tr:nth-child(odd) td {
    background: #dde9f5;
    border-right-color: #dde9f5;
}
tbody tr:last-child td {
    background: #fff;
    border-right-color: #d9d9d9;
}
tbody th {
    height: 20px;
    border-right: 1px solid #9f9f9f;
    border-bottom: 1px solid #d4d4d4;
    font-size: 13px;
    color: #555;
}
td.num {
    padding: 0 2px 0 0;
    text-align: right;
    font-size: 13px;
}
td.season {
    padding: 0 0 0 1px;
    text-align: left;
}
.cut {
    overflow: hidden;
}
.cut span {
    font-size: 13px;
    line-height: 1;
}
.vscroll {
    flex: none;
    display: flex;
    flex-direction: column;
    align-items: flex-end;
    gap: 5px;
    width: 16px;
    padding: 11px 0 1px;
    background: #f3f3f3;
}
.vthumb {
    width: 9px;
    height: 18px;
    border-radius: 5px;
    background: #6e6e6e;
}
.down {
    margin-top: auto;
}

/* sheet tabs */
.sheet-bar {
    flex: none;
    display: flex;
    align-items: flex-start;
    height: 17px;
    overflow: hidden;
    border-top: 1px solid #a3a8a3;
    background: #f5f7f6;
    font-size: 12px;
}
.sheet-nav {
    display: flex;
    align-items: center;
    gap: 24px;
    width: 91px;
    height: 25px;
    padding-left: 16px;
}
.sheet-nav button {
    display: flex;
}
.sheet-tab {
    width: 64px;
    height: 25px;
    border-right: 1px solid #a3a8a3;
    color: #444;
}
.current {
    width: 65px;
    border-left: 1px solid #a3a8a3;
    background: #fff;
    color: #0f6c38;
    font-weight: bold;
}
.add-sheet {
    display: flex;
    align-items: center;
    height: 25px;
    margin-left: 32px;
}
.hscroll {
    display: flex;
    align-items: center;
    width: 775px;
    height: 25px;
    margin-left: auto;
    padding-left: 12px;
    gap: 14px;
    background: #efefef;
}
.htrack {
    flex: 1;
    display: flex;
    align-items: center;
    gap: 5px;
    height: 25px;
    padding: 0 18px 0 4px;
    background: #f3f3f3;
}
.hroom {
    flex: 1;
}
.hthumb {
    width: 59%;
    height: 9px;
    border-radius: 4px;
    background: #6e6e6e;
}
```
